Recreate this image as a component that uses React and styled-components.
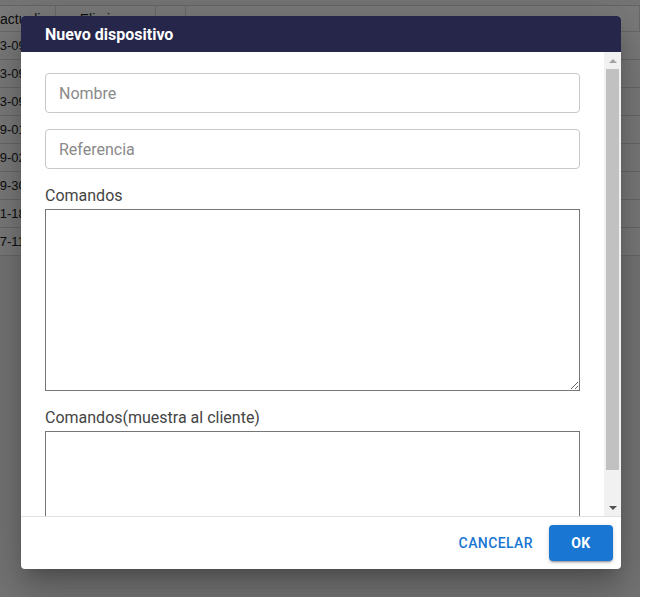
import styled, { createGlobalStyle } from "styled-components";

const GlobalStyle = createGlobalStyle`
  * {
    box-sizing: border-box;
  }

  body {
    margin: 0;
    background-color: #ffffff;
    font-family: Roboto, "Noto Sans", sans-serif;
  }
`;

const rows = [
  "2023-09-14 10:21",
  "2023-09-14 10:48",
  "2023-09-21 16:02",
  "2019-01-22 09:15",
  "2019-02-05 12:40",
  "2019-30-11 18:03",
  "2021-18-07 08:30",
  "2017-11-29 14:55",
];

export default function App() {
  return (
    <>
      <GlobalStyle />
      <Stage>
        <Table>
          <colgroup>
            <col style={{ width: 55 }} />
            <col style={{ width: 100 }} />
            <col style={{ width: 30 }} />
            <col />
          </colgroup>
          <thead>
            <tr>
              <HeadCell>actualizada</HeadCell>
              <HeadCell $center>Eliminar</HeadCell>
              <HeadCell />
              <HeadCell />
            </tr>
          </thead>
          <tbody>
            {rows.map((date, i) => (
              <tr key={i}>
                <DateCell>{date}</DateCell>
                <Cell />
                <Cell />
                <Cell />
              </tr>
            ))}
          </tbody>
        </Table>

        <Backdrop>
          <Dialog>
            <Header>Nuevo dispositivo</Header>
            <Content>
              <Body>
                <Input placeholder="Nombre" />
                <Input placeholder="Referencia" />
                <Label>Comandos</Label>
                <TextArea $height={182} />
                <Label>Comandos(muestra al cliente)</Label>
                <TextArea $height={98} />
              </Body>
              <ScrollBar>
                <Arrow $dir="up" />
                <Track>
                  <Thumb />
                </Track>
                <Arrow $dir="down" />
              </ScrollBar>
            </Content>
            <Footer>
              <TextButton>Cancelar</TextButton>
              <PrimaryButton>OK</PrimaryButton>
            </Footer>
          </Dialog>
        </Backdrop>
      </Stage>
    </>
  );
}

const Stage = styled.div`
  width: 640px;
  height: 597px;
  position: relative;
  overflow: hidden;
  padding-top: 5px;
  background-color: #f4f4f4;
`;

const Table = styled.table`
  width: 100%;
  table-layout: fixed;
  border-collapse: collapse;
  background-color: #ffffff;
  border-top: 1px solid #d6d6d6;
  font-family: "Liberation Sans", Arial, sans-serif;
  font-size: 14px;
  color: #222222;

  tr {
    border-bottom: 1px solid #dcdcdc;
  }
`;

const HeadCell = styled.th`
  height: 26px;
  padding: 0;
  font-weight: 400;
  white-space: nowrap;
  overflow: hidden;
  text-align: ${(props) => (props.$center ? "center" : "left")};
  border-right: 1px solid #dcdcdc;
`;

const Cell = styled.td`
  height: 28px;
  padding: 0;
`;

const DateCell = styled(Cell)`
  white-space: nowrap;
  overflow: hidden;
  font-size: 13px;
  text-indent: -22px;
`;

const Backdrop = styled.div`
  position: absolute;
  inset: 0;
  display: flex;
  align-items: flex-start;
  padding: 16px 0 0 21px;
  background-color: rgba(0, 0, 0, 0.52);
`;

const Dialog = styled.div`
  width: 600px;
  height: 553px;
  display: flex;
  flex-direction: column;
  overflow: hidden;
  border-radius: 4px;
  background-color: #ffffff;
  box-shadow: 0 11px 15px -7px rgba(0, 0, 0, 0.2), 0 24px 38px 3px rgba(0, 0, 0, 0.14),
    0 9px 46px 8px rgba(0, 0, 0, 0.12);
`;

const Header = styled.div`
  height: 36px;
  flex-shrink: 0;
  display: flex;
  align-items: center;
  padding: 0 24px;
  font-size: 16px;
  font-weight: 700;
  color: #ffffff;
  background-color: #25264a;
`;

const Content = styled.div`
  flex: 1;
  min-height: 0;
  display: flex;
`;

const Body = styled.div`
  flex: 1;
  overflow: hidden;
  padding: 21px 24px 20px;
`;

const ScrollBar = styled.div`
  width: 17px;
  flex-shrink: 0;
  display: flex;
  flex-direction: column;
  background-color: #f1f1f1;
`;

const Arrow = styled.div`
  height: 17px;
  flex-shrink: 0;
  display: flex;
  align-items: center;
  justify-content: center;

  &::before {
    content: "";
    border-left: 4px solid transparent;
    border-right: 4px solid transparent;
    ${(props) =>
      props.$dir === "up"
        ? "border-bottom: 4px solid #a3a3a3;"
        : "border-top: 4px solid #505050;"}
  }
`;

const Track = styled.div`
  flex: 1;
  padding: 0 2px;
`;

const Thumb = styled.div`
  height: 401px;
  background-color: #c1c1c1;
`;

const Input = styled.input`
  display: block;
  width: 100%;
  height: 40px;
  margin-bottom: 16px;
  padding: 0 13px;
  border: 1px solid #c8c8c8;
  border-radius: 4px;
  outline: none;
  font-family: Roboto, sans-serif;
  font-size: 16px;
  color: #333333;

  &::placeholder {
    color: #8a8a8a;
  }

  &:last-of-type {
    margin-bottom: 0;
  }
`;

const Label = styled.div`
  margin: 17px 0 4px;
  font-size: 16px;
  line-height: 19px;
  color: #444444;
`;

const TextArea = styled.textarea`
  display: block;
  width: 100%;
  height: ${(props) => props.$height}px;
  padding: 2px;
  border: 1px solid #767676;
  border-radius: 0;
  outline: none;
  font-family: Roboto, sans-serif;
  font-size: 14px;
`;

const Footer = styled.div`
  height: 53px;
  flex-shrink: 0;
  display: flex;
  align-items: center;
  justify-content: flex-end;
  gap: 8px;
  padding: 0 8px;
  border-top: 1px solid #e0e0e0;
`;

const TextButton = styled.button`
  padding: 6px 8px;
  border: none;
  background: none;
  font-family: Roboto, sans-serif;
  font-size: 14px;
  font-weight: 500;
  line-height: 24px;
  letter-spacing: 0.4px;
  text-transform: uppercase;
  color: #1976d2;
  cursor: pointer;
`;

const PrimaryButton = styled.button`
  min-width: 64px;
  height: 36px;
  padding: 6px 16px;
  border: none;
  border-radius: 4px;
  background-color: #1976d2;
  font-family: Roboto, sans-serif;
  font-size: 14px;
  font-weight: 700;
  letter-spacing: 0.4px;
  color: #ffffff;
  cursor: pointer;
  box-shadow: 0 3px 1px -2px rgba(0, 0, 0, 0.2), 0 2px 2px 0 rgba(0, 0, 0, 0.14),
    0 1px 5px 0 rgba(0, 0, 0, 0.12);
`;
